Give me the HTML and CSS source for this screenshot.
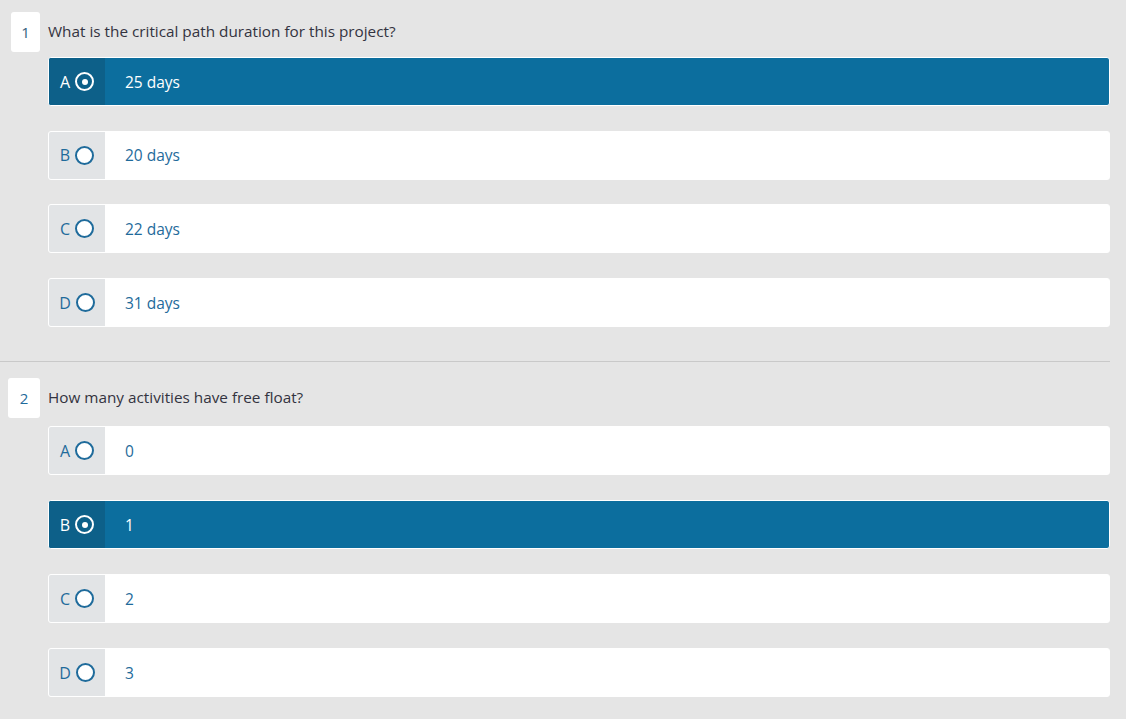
FILE: index.html
```html
<!DOCTYPE html>
<html>
<head>
<meta charset="utf-8">
<link rel="stylesheet" href="styles.css">
</head>
<body>
<div class="quiz">
  <section class="question q-first">
    <div class="q-head">
      <div class="q-num">1</div>
      <div class="q-text">What is the critical path duration for this project?</div>
    </div>
    <div class="options">
      <div class="option selected">
        <div class="opt-label"><span class="letter">A</span><span class="radio"></span></div>
        <div class="opt-text">25 days</div>
      </div>
      <div class="option">
        <div class="opt-label"><span class="letter">B</span><span class="radio"></span></div>
        <div class="opt-text">20 days</div>
      </div>
      <div class="option">
        <div class="opt-label"><span class="letter">C</span><span class="radio"></span></div>
        <div class="opt-text">22 days</div>
      </div>
      <div class="option">
        <div class="opt-label"><span class="letter">D</span><span class="radio"></span></div>
        <div class="opt-text">31 days</div>
      </div>
    </div>
  </section>
  <hr class="sep">
  <section class="question q-second">
    <div class="q-head">
      <div class="q-num">2</div>
      <div class="q-text">How many activities have free float?</div>
    </div>
    <div class="options">
      <div class="option">
        <div class="opt-label"><span class="letter">A</span><span class="radio"></span></div>
        <div class="opt-text">0</div>
      </div>
      <div class="option selected">
        <div class="opt-label"><span class="letter">B</span><span class="radio"></span></div>
        <div class="opt-text">1</div>
      </div>
      <div class="option">
        <div class="opt-label"><span class="letter">C</span><span class="radio"></span></div>
        <div class="opt-text">2</div>
      </div>
      <div class="option">
        <div class="opt-label"><span class="letter">D</span><span class="radio"></span></div>
        <div class="opt-text">3</div>
      </div>
    </div>
  </section>
</div>
</body>
</html>
```

FILE: styles.css
```css
html, body {
  margin: 0;
  padding: 0;
  background: #e5e5e5;
  font-family: "Open Sans", "Noto Sans", sans-serif;
}

.quiz {
  width: 1110px;
}

.question {
  display: flex;
  flex-direction: column;
}

.q-first {
  padding-top: 12px;
  padding-bottom: 34px;
}

.q-second {
  padding-top: 16px;
}

.q-head {
  display: flex;
  align-items: center;
  height: 40px;
}

.q-first .q-head { margin-bottom: 5px; }
.q-second .q-head { margin-bottom: 8px; }

.q-num {
  width: 29px;
  height: 40px;
  margin-left: 11px;
  box-sizing: border-box;
  background: #fff;
  border-radius: 3px;
  display: flex;
  align-items: center;
  justify-content: center;
  font-size: 15px;
  color: #34607c;
}

.q-second .q-num {
  width: 32px;
  margin-left: 8px;
  color: #1f6b9b;
}

.q-text {
  margin-left: 8px;
  margin-top: -2px;
  font-size: 15.3px;
  color: #333340;
}

.options {
  display: flex;
  flex-direction: column;
  gap: 24.7px;
  padding-left: 48px;
}

.q-second .options {
  gap: 25px;
}

.option {
  display: flex;
  height: 49px;
  box-sizing: border-box;
  border: 1px solid #fff;
  border-radius: 3px;
  background: #fff;
  overflow: hidden;
}

.opt-label {
  width: 56px;
  flex: none;
  display: flex;
  align-items: center;
  justify-content: center;
  gap: 5px;
  background: #e2e4e6;
  color: #1f6b9b;
  font-size: 16px;
}

.radio {
  width: 19px;
  height: 19px;
  box-sizing: border-box;
  border: 2px solid #1f6b9b;
  border-radius: 50%;
  background: #fff;
  position: relative;
}

.opt-text {
  display: flex;
  align-items: center;
  padding-left: 20px;
  font-size: 15.5px;
  color: #1f6b9b;
}

.option.selected {
  background: #0c6e9e;
}

.option.selected .opt-label {
  background: #0d6089;
  color: #fff;
}

.option.selected .radio {
  border-color: #fff;
  background: transparent;
}

.option.selected .radio::after {
  content: "";
  position: absolute;
  left: 50%;
  top: 50%;
  width: 6px;
  height: 6px;
  margin: -3px 0 0 -3px;
  border-radius: 50%;
  background: #fff;
}

.option.selected .opt-text {
  color: #fff;
}

.sep {
  margin: 0;
  border: 0;
  height: 1px;
  background: #c9c9c9;
}
```
